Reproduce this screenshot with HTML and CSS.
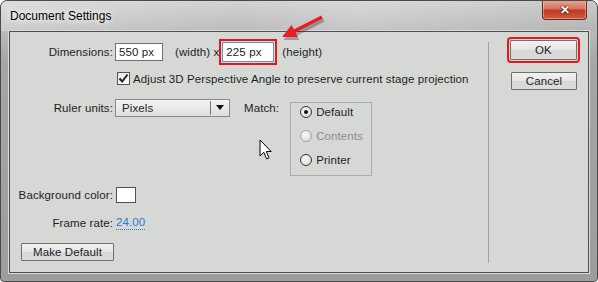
FILE: index.html
```html
<!DOCTYPE html>
<html lang="en">
<head>
<meta charset="UTF-8">
<title>Document Settings</title>
<link rel="stylesheet" href="styles.css">
</head>
<body>
<div class="window">
    <div class="titlebar">
        <span class="title">Document Settings</span>
        <button class="close-btn">&#x2715;</button>
    </div>
    <div class="client">
        <div class="main">
            <div class="row row-dims">
                <label class="label">Dimensions:</label>
                <span class="field w550">550 px</span>
                <span class="text width-text">(width) x</span>
                <span class="field field-focus">225 px</span>
                <span class="text height-text">(height)</span>
            </div>
            <div class="row row-check">
                <span class="checkbox">
                    <svg width="11" height="11" viewBox="0 0 11 11"><path d="M1.5 5.5 L4.2 8.5 L9.5 1.5" fill="none" stroke="#222" stroke-width="2"/></svg>
                </span>
                <span class="text">Adjust 3D Perspective Angle to preserve current stage projection</span>
            </div>
            <div class="row row-ruler">
                <label class="label">Ruler units:</label>
                <div class="select">
                    <span class="select-value">Pixels</span>
                    <span class="select-arrow"></span>
                </div>
                <span class="text match-label">Match:</span>
                <div class="match-box">
                    <div class="radio-row"><span class="radio checked"></span>Default</div>
                    <div class="radio-row disabled"><span class="radio"></span>Contents</div>
                    <div class="radio-row"><span class="radio"></span>Printer</div>
                </div>
            </div>
            <div class="row row-bg">
                <label class="label">Background color:</label>
                <span class="swatch"></span>
            </div>
            <div class="row row-fps">
                <label class="label">Frame rate:</label>
                <span class="link-value">24.00</span>
            </div>
            <div class="row row-default">
                <button class="btn btn-default">Make Default</button>
            </div>
        </div>
        <div class="divider"></div>
        <div class="side">
            <button class="btn btn-ok">OK</button>
            <button class="btn btn-cancel">Cancel</button>
        </div>
    </div>

    <!-- annotation arrow -->
    <svg class="arrow" width="60" height="36" viewBox="0 0 60 36">
        <g transform="translate(1.5,3)" opacity="0.35">
            <path d="M52 7 L24 21.3" stroke="#333" stroke-width="4" fill="none"/>
            <path d="M12 27 L21.6 15 L27.8 27 Z" fill="#333"/>
        </g>
        <path d="M52 7 L24 21.3" stroke="#ec1c24" stroke-width="3.5" fill="none"/>
        <path d="M12 27 L21.6 15 L27.8 27 Z" fill="#ec1c24"/>
    </svg>

    <!-- mouse pointer -->
    <svg class="pointer" width="14" height="22" viewBox="0 0 14 22">
        <path d="M1 1 L1 17 L4.8 13.3 L7.6 19.8 L10 18.8 L7.3 12.5 L12.2 12.5 Z" fill="#fff" stroke="#000" stroke-width="1" stroke-linejoin="miter"/>
    </svg>
</div>
</body>
</html>
```

FILE: styles.css
```css
* {
    box-sizing: border-box;
}
body {
    margin: 0;
    padding: 0;
    background-color: #fff;
    font-family: "Liberation Sans", Arial, sans-serif;
    font-size: 11.5px;
    letter-spacing: 0.1px;
    color: #1e1e1e;
}
.window {
    position: relative;
    width: 598px;
    height: 282px;
    border: 1px solid #4a4a4a;
    border-radius: 7px 7px 4px 4px;
    background: linear-gradient(180deg, #d2d2d2 0, #bdbdbd 28px, #a6a6a6 60px, #9d9d9d 100%);
    display: flex;
    flex-direction: column;
    overflow: hidden;
}
.titlebar {
    height: 30px;
    display: flex;
    align-items: flex-start;
    justify-content: space-between;
    background: linear-gradient(100deg, rgba(255,255,255,0.25) 0, rgba(255,255,255,0) 40%, rgba(255,255,255,0.15) 60%, rgba(0,0,0,0.04) 100%);
}
.title {
    margin: 8px 0 0 9px;
    font-size: 12px;
    letter-spacing: 0;
    color: #000;
    text-shadow: 0 0 6px #fff, 0 0 10px #fff;
}
.close-btn {
    width: 45px;
    height: 20px;
    margin: -1px 10px 0 0;
    border: 1px solid #6b2a20;
    border-top: none;
    border-radius: 0 0 4px 4px;
    background: linear-gradient(180deg, #e7a996 0, #d9735e 45%, #c03a22 55%, #cf5a3c 100%);
    color: #fff;
    font-size: 12px;
    font-weight: bold;
    line-height: 18px;
    padding: 0;
    text-shadow: 0 0 2px #3a0a00, 0 0 1px #3a0a00;
    box-shadow: inset 0 0 0 1px rgba(255,255,255,0.35);
}
.client {
    display: flex;
    margin: 0 8px 0 8px;
    height: 242px;
    border: 1px solid #4f4f4f;
    background-color: #d6d8d6;
    box-shadow: 0 0 0 1px #d8d8d8;
}
.main {
    width: 478px;
    padding-top: 10px;
}
.row {
    display: flex;
    align-items: center;
}
.label {
    width: 103px;
    margin-right: 2px;
    text-align: right;
    white-space: nowrap;
}
.text {
    white-space: nowrap;
}
.field {
    height: 18px;
    border: 1px solid #707070;
    background-color: #fff;
    padding: 1px 3px;
    line-height: 14px;
}
.w550 {
    width: 48px;
}
.width-text {
    margin-left: 12px;
}
.field-focus {
    width: 52px;
    height: 20px;
    margin-left: 3px;
    border-color: #5b9bd5;
    line-height: 16px;
    outline: 2px solid #e41a1a;
    outline-offset: 1px;
}
.height-text {
    margin-left: 8px;
}
.row-dims {
    height: 20px;
}
.row-check {
    margin-top: 10px;
    padding-left: 107px;
}
.checkbox {
    width: 13px;
    height: 13px;
    border: 1px solid #555;
    background: linear-gradient(135deg, #e6e6e6, #fdfdfd);
    margin-right: 3px;
    display: flex;
    align-items: center;
    justify-content: center;
}
.row-ruler {
    margin-top: 14px;
    align-items: flex-start;
}
.row-ruler .label,
.match-label {
    line-height: 18px;
}
.select {
    width: 115px;
    height: 18px;
    border: 1px solid #8a8a8a;
    background: linear-gradient(180deg, #f4f4f4, #dedede);
    display: flex;
    align-items: center;
    justify-content: space-between;
}
.select-value {
    padding-left: 6px;
}
.select-arrow {
    width: 19px;
    height: 14px;
    border-left: 1px solid #777;
    position: relative;
}
.select-arrow::after {
    content: "";
    position: absolute;
    left: 5px;
    top: 4px;
    border-left: 4px solid transparent;
    border-right: 4px solid transparent;
    border-top: 5px solid #111;
}
.match-label {
    margin-left: 14px;
}
.match-box {
    width: 82px;
    height: 74px;
    margin: 3px 0 0 11px;
    border: 1px solid #ababab;
    padding: 0 0 0 9px;
}
.radio-row {
    display: flex;
    align-items: center;
    height: 24px;
}
.radio-row:first-child {
    margin-top: -3px;
}
.radio-row.disabled {
    color: #8c8c8c;
}
.radio {
    width: 12px;
    height: 12px;
    border: 1px solid #333;
    border-radius: 50%;
    background: radial-gradient(circle at 40% 35%, #fafafa, #d4d4d4);
    margin-right: 4px;
    display: flex;
    align-items: center;
    justify-content: center;
}
.radio.checked::after {
    content: "";
    width: 4px;
    height: 4px;
    border-radius: 50%;
    background-color: #111;
}
.disabled .radio {
    border-color: #a4a4a4;
}
.row-bg {
    margin-top: 11px;
    height: 16px;
}
.swatch {
    width: 20px;
    height: 16px;
    border: 1px solid #505050;
    background-color: #fff;
    margin-left: 1px;
}
.row-fps {
    margin-top: 12px;
    height: 16px;
}
.link-value {
    margin-left: 1px;
    color: #2f7ad0;
    border-bottom: 1px dotted #2f7ad0;
    line-height: 13px;
}
.row-default {
    margin-top: 12px;
    padding-left: 11px;
}
.btn {
    font-family: "Liberation Sans", Arial, sans-serif;
    font-size: 11.5px;
    letter-spacing: 0.1px;
    color: #1e1e1e;
    height: 18px;
    padding: 0;
    border: 1px solid #6f6f6f;
    border-radius: 1px;
    background: linear-gradient(180deg, #f1f1f1 0, #e6e6e6 50%, #d7d7d7 51%, #dcdcdc 100%);
}
.btn-default {
    width: 93px;
}
.divider {
    width: 1px;
    height: 221px;
    margin-top: 10px;
    background-color: #a2a2a2;
}
.side {
    display: flex;
    flex-direction: column;
    padding: 8px 0 0 21px;
}
.btn-ok {
    width: 67px;
    height: 20px;
    outline: 2px solid #e41a1a;
    outline-offset: 1px;
}
.btn-cancel {
    width: 66px;
    margin: 12px 0 0 1px;
}
.arrow {
    position: absolute;
    left: 269px;
    top: 9px;
}
.pointer {
    position: absolute;
    left: 258px;
    top: 138px;
}
```
